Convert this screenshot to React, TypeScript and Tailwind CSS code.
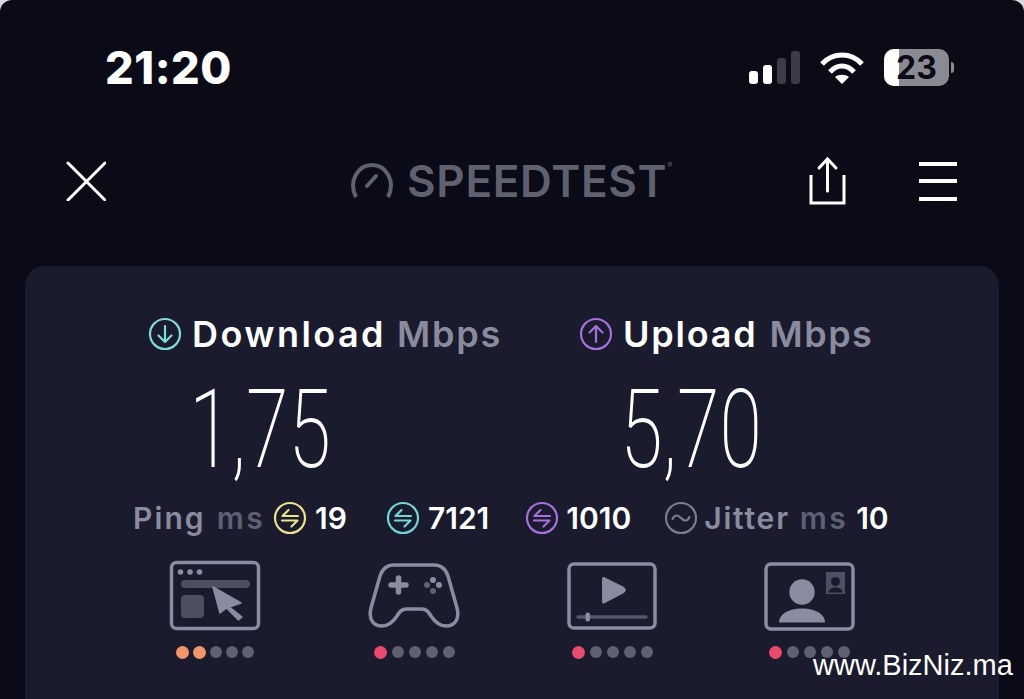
import React from "react";

const SANS = "font-['Inter','Liberation_Sans',sans-serif]";

function Ring({ color, children }: { color: string; children: React.ReactNode }) {
  return (
    <svg width="34" height="34" viewBox="0 0 34 34" fill="none" stroke={color} strokeWidth="2.2" strokeLinecap="round" strokeLinejoin="round" className="shrink-0">
      <circle cx="17" cy="17" r="15" />
      {children}
    </svg>
  );
}

const Transfer = () => (
  <>
    <path d="M25 15H9.500L15.500 9" />
    <path d="M9 19.500H24.500L18.500 25.500" />
  </>
);

function Dots({ active, color, big }: { active: number; color: string; big?: boolean }) {
  return (
    <div className={`flex items-center ${big ? "gap-[4px]" : "gap-[5px]"} h-[14px]`}>
      {[0, 1, 2, 3, 4].map((i) =>
        i < active ? (
          <span key={i} className="w-[13px] h-[13px] rounded-full" style={{ background: color }} />
        ) : (
          <span key={i} className="w-[12px] h-[12px] rounded-full bg-[#5f6071]" />
        )
      )}
    </div>
  );
}

function BrowseIcon() {
  return (
    <svg width="92" height="72" viewBox="0 0 92 72" fill="none">
      <rect x="2.500" y="2.500" width="87" height="66" rx="5" stroke="#8b8ca0" strokeWidth="3.500" />
      <circle cx="11.500" cy="12" r="2.800" fill="#8b8ca0" />
      <circle cx="21" cy="12" r="2.800" fill="#8b8ca0" />
      <circle cx="30.500" cy="12" r="2.800" fill="#8b8ca0" />
      <rect x="12" y="20" width="69" height="8" rx="4" fill="#4d4e60" />
      <rect x="12" y="35" width="23" height="23" rx="4" fill="#4d4e60" />
      <path d="M44 27 L72 43 L60.500 47 L73 57 L69.500 60 L57.500 48 L51 53 Z" fill="#8b8ca0" stroke="#8b8ca0" strokeWidth="1.500" strokeLinejoin="round" />
    </svg>
  );
}

function GameIcon() {
  return (
    <svg width="92" height="68" viewBox="0 0 92 68" fill="none">
      <path d="M26 3H66C74 3 78 8 80 14L89 46C92 58 86 64 78 64C71 64 67 60 63 54C60 49 58 47 54 47H38C34 47 32 49 29 54C25 60 21 64 14 64C6 64 0 58 3 46L12 14C14 8 18 3 26 3Z" stroke="#8b8ca0" strokeWidth="3.500" />
      <path d="M30.500 16V30M23 23H38" stroke="#8b8ca0" strokeWidth="5.500" strokeLinecap="round" />
      <circle cx="65" cy="18" r="3" fill="#8b8ca0" />
      <circle cx="71" cy="23" r="3" fill="#8b8ca0" />
      <circle cx="65" cy="29" r="3" fill="#5f6071" />
      <circle cx="59" cy="23" r="3" fill="#5f6071" />
    </svg>
  );
}

function VideoIcon() {
  return (
    <svg width="90" height="68" viewBox="0 0 90 68" fill="none">
      <rect x="2" y="2" width="86" height="64" rx="5" stroke="#8b8ca0" strokeWidth="3.500" />
      <path d="M37 15.500 L57 25.500 Q60 28 57 30.500 L37 41 Q35.500 42 35.500 39 V18 Q35.500 14.500 37 15.500Z" fill="#8b8ca0" stroke="#8b8ca0" strokeWidth="1" />
      <path d="M11 55H79" stroke="#55566a" strokeWidth="3.500" strokeLinecap="round" />
      <rect x="18.500" y="50.500" width="4.500" height="9" rx="2" fill="#8b8ca0" />
    </svg>
  );
}

function CallIcon() {
  return (
    <svg width="91" height="69" viewBox="0 0 91 69" fill="none">
      <rect x="2" y="2" width="87" height="65" rx="5" stroke="#8b8ca0" strokeWidth="3.500" />
      <circle cx="38" cy="30" r="12.700" fill="#8b8ca0" />
      <path d="M15 60.500C15 52 25 46.500 38 46.500C51 46.500 61 52 61 60.500Z" fill="#8b8ca0" />
      <rect x="62" y="10" width="19" height="22" fill="#4e4f62" />
      <circle cx="71.500" cy="19.500" r="4.500" fill="#1a1b2d" />
      <path d="M64.500 30.500C64.500 27 67.500 25.500 71.500 25.500C75.500 25.500 78.500 27 78.500 30.500Z" fill="#1a1b2d" />
    </svg>
  );
}

const TILES = [
  { icon: <BrowseIcon />, active: 2, color: "#f2956b", big: true, offset: "ml-[144px]" },
  { icon: <GameIcon />, active: 1, color: "#ea4a6e", offset: "ml-[107px]" },
  { icon: <VideoIcon />, active: 1, color: "#ea4a6e", offset: "ml-[106px]" },
  { icon: <CallIcon />, active: 1, color: "#ea4a6e", offset: "ml-[105px]" },
];

export default function App() {
  return (
    <div className={`w-[1024px] h-[699px] overflow-hidden bg-[#d9d9de] ${SANS}`}>
      <div className="relative h-full bg-[#0a0b16] rounded-t-[12px]">
        {/* status bar */}
        <div className="flex items-center justify-between h-[49px] pt-[43px] pl-[105px] pr-[70px] box-content">
          <span className="text-white font-extrabold text-[45px] leading-none tracking-[.012em]">21:20</span>
          <div className="flex items-center">
            <svg width="52" height="36" viewBox="0 0 52 36" className="mr-[19px]">
              <rect x="1" y="21" width="9" height="13" rx="3" fill="#fff" />
              <rect x="15" y="15" width="9" height="19" rx="3" fill="#fff" />
              <rect x="29" y="8" width="9" height="26" rx="3" fill="#3b3c48" />
              <rect x="43" y="1" width="9" height="33" rx="3" fill="#3b3c48" />
            </svg>
            <svg width="46" height="36" viewBox="0 0 46 36" fill="none" stroke="#fff" strokeWidth="5" className="mr-[19px]">
              <path d="M3 14C14 2 32 2 43 14" />
              <path d="M11 22C18 14 28 14 35 22" />
              <path d="M23 34L16 27C20 24 26 24 30 27Z" fill="#fff" stroke="none" />
            </svg>
            <div className="relative w-[65px] h-[37px] rounded-[10px] overflow-hidden bg-[#8a8a93] flex items-center justify-center">
              <div className="absolute left-0 top-0 bottom-0 w-[15px] bg-white" />
              <span className="relative text-[#0a0b16] font-bold text-[32px] leading-none">23</span>
            </div>
            <div className="w-[3px] h-[11px] ml-[2px] rounded-r-full bg-[#8a8a93]" />
          </div>
        </div>

        {/* nav */}
        <div className="flex items-center justify-between h-[48px] mt-[65px] pl-[66px] pr-[67px]">
          <svg width="40" height="40" viewBox="0 0 40 40" fill="none" stroke="#fff" strokeWidth="3" strokeLinecap="round">
            <path d="M2 2L39 39M39 2L2 39" />
          </svg>
          <div className="flex items-center text-[#5f616e] ml-[243px]">
            <svg width="46" height="40" viewBox="0 0 46 40" fill="none" stroke="#5f616e" strokeWidth="4" className="mr-[12px]">
              <path d="M7 36C-1 20 9 4 23 4C37 4 47 20 39 36" />
              <path d="M18 25L27 15" strokeLinecap="round" />
            </svg>
            <span className="text-[44px] leading-none font-semibold tracking-[.016em]">SPEEDTEST</span>
            <span className="text-[7px] self-start mt-[2px]">®</span>
          </div>
          <div className="flex items-center gap-[72px] ml-auto">
            <svg width="38" height="50" viewBox="0 0 38 50" fill="none" stroke="#fff" strokeWidth="3">
              <path d="M2 19V47H35V19" />
              <path d="M18.500 35V4M10 12L18.500 3L27 12" strokeLinecap="round" />
            </svg>
            <div className="flex flex-col gap-[13.500px]">
              <span className="block w-[38px] h-[4px] bg-white" />
              <span className="block w-[38px] h-[4px] bg-white" />
              <span className="block w-[38px] h-[4px] bg-white" />
            </div>
          </div>
        </div>

        {/* result card */}
        <div className="ml-[25px] mr-[25px] mt-[61px] h-[460px] rounded-t-[20px] bg-[#1a1b2d] pt-[47px]">
          <div className="flex items-center text-[36px] leading-[42px] font-semibold tracking-[.05em] whitespace-nowrap">
            <div className="flex items-center ml-[123px] w-[431px]">
              <Ring color="#7fdcd8">
                <path d="M17 9V25M10.500 18.500L17 25L23.500 18.500" />
              </Ring>
              <span className="text-white ml-[10px] tracking-[.068em]">Download</span>
              <span className="text-[#8a8c9e] ml-[11px]">Mbps</span>
            </div>
            <div className="flex items-center">
              <Ring color="#a56fe0">
                <path d="M17 25V9M10.500 15.500L17 9L23.500 15.500" />
              </Ring>
              <span className="text-white ml-[10px]">Upload</span>
              <span className="text-[#8a8c9e] ml-[12px] tracking-[.04em]">Mbps</span>
            </div>
          </div>

          <div className="flex mt-[17px] font-['Roboto',sans-serif] font-extralight text-white text-[110px] leading-[116px]">
            <div className="w-[432px] pl-[130px]">
              <span className="inline-block w-[210px] text-center scale-x-[.7]">1,75</span>
            </div>
            <div className="pl-[129px]">
              <span className="inline-block w-[210px] text-center scale-x-[.7]">5,70</span>
            </div>
          </div>

          <div className="flex items-center mt-[12px] ml-[108px] text-[30px] leading-[36px] font-semibold whitespace-nowrap">
            <span className="text-[#8a8c9e] tracking-[.07em]">Ping</span>
            <span className="text-[#5f6172] ml-[11px] tracking-[.08em]">ms</span>
            <span className="ml-[8px] flex"><Ring color="#ece08f"><Transfer /></Ring></span>
            <span className="text-white ml-[8px]">19</span>
            <span className="ml-[39px] flex"><Ring color="#74d5d6"><Transfer /></Ring></span>
            <span className="text-white ml-[8px]">7121</span>
            <span className="ml-[36px] flex"><Ring color="#a56fe0"><Transfer /></Ring></span>
            <span className="text-white ml-[7px]">1010</span>
            <span className="ml-[33px] flex">
              <Ring color="#7b7d8d">
                <path d="M8.500 18C10.500 13.500 14 13.500 17 17C20 20.500 23.500 20.500 25.500 16" />
              </Ring>
            </span>
            <span className="text-[#8a8c9e] ml-[6px] tracking-[.06em]">Jitter</span>
            <span className="text-[#5f6172] ml-[10px] tracking-[.08em]">ms</span>
            <span className="text-white ml-[8px]">10</span>
          </div>

          <div className="flex mt-[24px]">
            {TILES.map((tile, i) => (
              <div key={i} className={`flex flex-col items-center gap-[13px] w-[92px] ${tile.offset}`}>
                <div className="h-[72px] flex items-center">{tile.icon}</div>
                <Dots active={tile.active} color={tile.color} big={tile.big} />
              </div>
            ))}
          </div>
        </div>

        <span className="absolute left-[813px] top-[648px] font-['Liberation_Sans',sans-serif] text-white text-[29px] leading-[34px] whitespace-nowrap">
          www.BizNiz.ma
        </span>
      </div>
    </div>
  );
}
